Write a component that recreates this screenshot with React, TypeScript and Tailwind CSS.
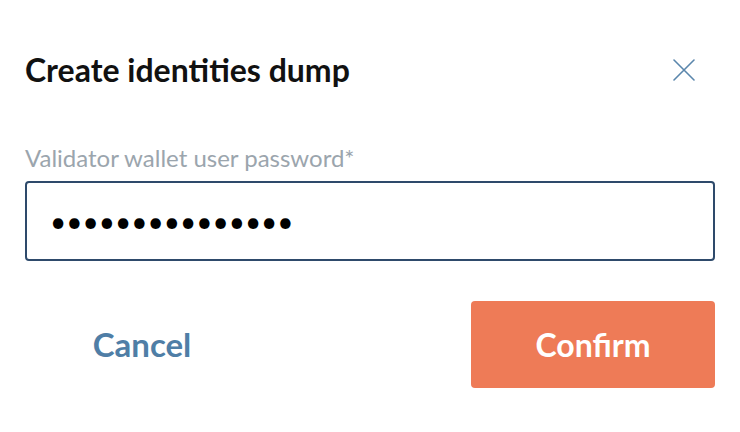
export default function App() {
  return (
    <div
      className="w-[740px] h-[432px] bg-white px-[25px] pt-[50px]"
      style={{ fontFamily: "Lato, 'Open Sans', sans-serif" }}
    >
      <div className="flex items-center justify-between h-[40px]">
        <h1 className="text-[32px] font-bold text-[#111111] leading-none">
          Create identities dump
        </h1>
        <button className="mr-[20px] text-[#5a86ac]">
          <svg width="22" height="22" viewBox="0 0 22 22" fill="none" stroke="currentColor" strokeWidth="1.6" strokeLinecap="round">
            <path d="M1 1L21 21M21 1L1 21" />
          </svg>
        </button>
      </div>

      <label className="block mt-[54px] text-[24px] leading-[28px] text-[#9ba5ad]">
        Validator wallet user password*
      </label>
      <input
        type="password"
        readOnly
        defaultValue="abcdefghijklmno"
        className="mt-[9px] w-full h-[80px] rounded-[4px] border-2 border-[#2e4a6b] px-[23px] text-[28px] text-black outline-none"
      />

      <div className="mt-[40px] flex justify-between">
        <button className="w-[234px] h-[87px] text-[33px] font-bold text-[#4f7ea6]">
          Cancel
        </button>
        <button className="w-[244px] h-[87px] rounded-[4px] bg-[#ee7b57] text-[32px] font-bold text-white">
          Confirm
        </button>
      </div>
    </div>
  );
}
